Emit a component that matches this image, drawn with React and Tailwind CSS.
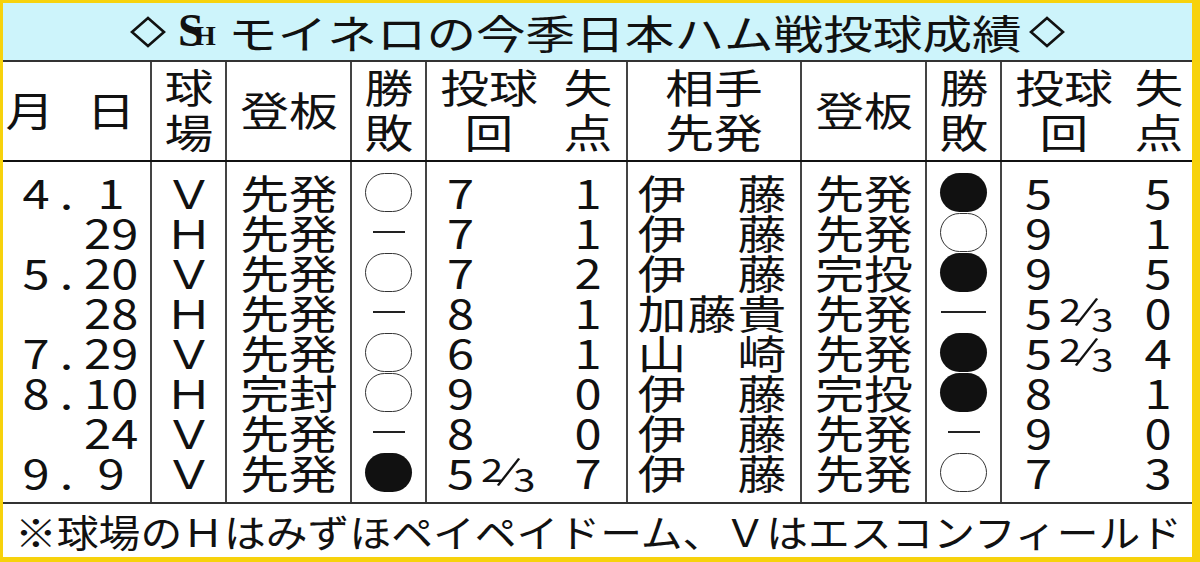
import React from 'react';

const cols = 'grid grid-cols-[147px_75px_125px_75px_125px_76px_174px_125px_75px_125px_67px]';
const line = 'border-l-2 border-[#444]';

// [month, day, park, role, result, innings, runs, opponent, oppRole, oppResult, oppInnings, oppRuns]
const rows = [
  ['4', '1', 'Ｖ', '先発', 'o', ['7'], '1', ['伊', '藤'], '先発', 'x', ['5'], '5'],
  [null, '29', 'Ｈ', '先発', '-', ['7'], '1', ['伊', '藤'], '先発', 'o', ['9'], '1'],
  ['5', '20', 'Ｖ', '先発', 'o', ['7'], '2', ['伊', '藤'], '完投', 'x', ['9'], '5'],
  [null, '28', 'Ｈ', '先発', '-', ['8'], '1', ['加', '藤', '貴'], '先発', 'L', ['5', true], '0'],
  ['7', '29', 'Ｖ', '先発', 'o', ['6'], '1', ['山', '崎'], '先発', 'x', ['5', true], '4'],
  ['8', '10', 'Ｈ', '完封', 'o', ['9'], '0', ['伊', '藤'], '完投', 'x', ['8'], '1'],
  [null, '24', 'Ｖ', '先発', '-', ['8'], '0', ['伊', '藤'], '先発', '-', ['9'], '0'],
  ['9', '9', 'Ｖ', '先発', 'x', ['5', true], '7', ['伊', '藤'], '先発', 'o', ['7'], '3'],
];

const T = ({ children, className = '' }) => (
  <span className={`inline-block whitespace-nowrap scale-x-[1.22] ${className}`}>{children}</span>
);

const Mark = ({ type }) => {
  if (type === 'o') return <div className="w-[47px] h-[39px] rounded-full border-[1.5px] border-[#333]" />;
  if (type === 'x') return <div className="w-[47px] h-[39px] rounded-full bg-[#111]" />;
  if (type === 'L') return <div className="w-[45px] h-[2px] bg-[#222]" />;
  return <div className="w-[32px] h-[2px] bg-[#222]" />;
};

const Innings = ({ value }) => (
  <>
    <T className="origin-left">{value[0]}</T>
    {value[1] && (
      <span className="inline-flex h-[36px] ml-[12px] text-[32px] leading-none scale-x-[1.25] origin-left">
        <span className="self-start mt-[-2px]">2</span>
        <span className="self-center w-[2px] h-[32px] bg-[#111] rotate-[32deg] mx-[3px]" />
        <span className="self-end mb-[-4px]">3</span>
      </span>
    )}
  </>
);

// hawks cap mark
const Logo = () => (
  <div className="relative w-[40px] h-[34px] shrink-0" style={{ fontFamily: "'Liberation Serif', serif" }}>
    <span className="absolute left-0 top-[-7px] text-[46px] leading-none font-bold">S</span>
    <span className="absolute left-[16px] top-[7px] text-[28px] leading-none font-bold">H</span>
  </div>
);

const Diamond = () => (
  <svg width="36" height="32" viewBox="0 0 36 32" className="shrink-0">
    <path d="M18 2 L34 16 L18 30 L2 16 Z" fill="none" stroke="#111" strokeWidth="2.6" />
  </svg>
);

const HeadCell = ({ lines, className = '' }) => (
  <div className={`flex flex-col items-center justify-center leading-[45px] pb-[4px] ${className}`}>
    {lines.map((l, i) => (
      <T key={i}>{l}</T>
    ))}
  </div>
);

const App = () => {
  return (
    <div
      className="w-[1200px] h-[562px] bg-[#f7d20c] pt-[3px] pl-[3px] pr-[8px] pb-[5px] text-[#111]"
      style={{ fontFamily: "'Noto Sans CJK JP', 'Noto Sans', sans-serif" }}
    >
      <div className="w-[1189px] h-[554px] bg-white flex flex-col">
        {/* title */}
        <div className="h-[57px] bg-[#cdf4fb] border-b-2 border-[#333] box-content flex items-center justify-center text-[40px] leading-none">
          <Diamond />
          <div className="ml-[12px]">
            <Logo />
          </div>
          <div className="ml-[10px] w-[795px] shrink-0">
            <span className="inline-block whitespace-nowrap origin-left scale-x-[1.24]">モイネロの今季日本ハム戦投球成績</span>
          </div>
          <div className="ml-[6px] flex">
            <Diamond />
          </div>
        </div>

        {/* header */}
        <div className={`${cols} h-[98px] border-b-2 border-[#111] box-content text-[40px]`}>
          <div className="flex items-center gap-[27px] pb-[4px]">
            <div className="w-[54px] text-center"><T>月</T></div>
            <div className="w-[54px] text-center"><T>日</T></div>
          </div>
          <HeadCell lines={['球', '場']} className={line} />
          <HeadCell lines={['登板']} className={line} />
          <HeadCell lines={['勝', '敗']} className={line} />
          <HeadCell lines={['投球', '回']} className={line} />
          <HeadCell lines={['失', '点']} />
          <HeadCell lines={['相手', '先発']} className={line} />
          <HeadCell lines={['登板']} className={line} />
          <HeadCell lines={['勝', '敗']} className={line} />
          <HeadCell lines={['投球', '回']} className={line} />
          <HeadCell lines={['失', '点']} />
        </div>

        {/* body */}
        <div className={`${cols} h-[340px] text-[40px] leading-[40px]`}>
          {[0, 1, 2, 3, 4, 5, 6, 7, 8, 9, 10].map((c) => (
            <div
              key={c}
              className={`flex flex-col pt-[10px] ${[1, 2, 3, 4, 6, 7, 8, 9].includes(c) ? line : ''}`}
            >
              {rows.map((r, i) => {
                let content = null;
                let align = 'justify-center';
                if (c === 0) {
                  align = 'justify-start';
                  content = (
                    <>
                      <div className="w-[50px] ml-[8px] text-center">{r[0] && <T>{r[0]}</T>}</div>
                      <div className="w-[8px] text-center">{r[0] && <T>.</T>}</div>
                      <div className="w-[47px] ml-[19px] text-center"><T>{r[1]}</T></div>
                    </>
                  );
                } else if (c === 1) content = <T>{r[2]}</T>;
                else if (c === 2) content = <T>{r[3]}</T>;
                else if (c === 3) content = <Mark type={r[4]} />;
                else if (c === 4) {
                  align = 'justify-start pl-[20px]';
                  content = <Innings value={r[5]} />;
                } else if (c === 5) content = <T>{r[6]}</T>;
                else if (c === 6) {
                  align = 'justify-start pl-[9px]';
                  content = (
                    <div className="w-[150px] flex justify-between">
                      {r[7].map((ch, k) => (
                        <div key={k} className="w-[50px] text-center"><T>{ch}</T></div>
                      ))}
                    </div>
                  );
                } else if (c === 7) content = <T>{r[8]}</T>;
                else if (c === 8) content = <Mark type={r[9]} />;
                else if (c === 9) {
                  align = 'justify-start pl-[23px]';
                  content = <Innings value={r[10]} />;
                } else content = <T>{r[11]}</T>;
                return (
                  <div key={i} className={`h-[40px] flex items-center ${align}`}>
                    {content}
                  </div>
                );
              })}
            </div>
          ))}
        </div>

        {/* footer */}
        <div className="h-[53px] border-t-2 border-[#333] box-content flex items-center pl-[12px] text-[38px] leading-none">
          <span className="inline-block whitespace-nowrap origin-left scale-x-[1.1]">
            ※球場のＨはみずほペイペイドーム、Ｖはエスコンフィールド
          </span>
        </div>
      </div>
    </div>
  );
};

export default App;
